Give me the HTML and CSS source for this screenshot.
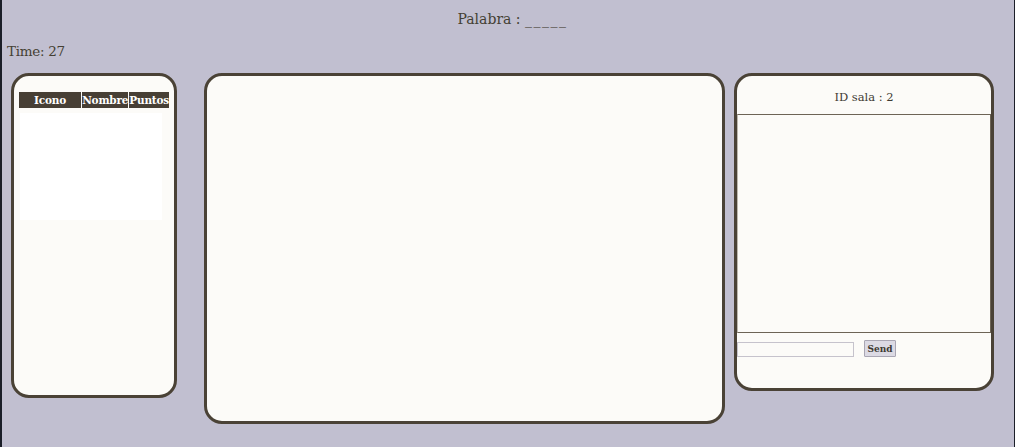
FILE: index.html
```html
<!DOCTYPE html>
<html lang="es">
<head>
<meta charset="utf-8">
<title>Juego</title>
<link rel="stylesheet" href="styles.css">
</head>
<body>
<div class="page">
  <header class="word">Palabra : <span class="blanks">_____</span></header>
  <div class="time">Time: 27</div>
  <main class="panels">
    <section class="panel players">
      <table class="score">
        <thead>
          <tr><th class="c-icon">Icono</th><th class="c-name">Nombre</th><th class="c-pts">Puntos</th></tr>
        </thead>
      </table>
      <div class="score-body"></div>
    </section>
    <section class="panel board"></section>
    <section class="panel chat">
      <div class="room">ID sala : 2</div>
      <div class="messages"></div>
      <div class="composer">
        <input class="msg" type="text">
        <button class="send" type="button">Send</button>
      </div>
    </section>
  </main>
</div>
</body>
</html>
```
FILE: styles.css
```css
html {
  background: #1b1e28;
}
body {
  margin: 0;
  font-family: "DejaVu Serif", "Liberation Serif", serif;
  color: #453f34;
}
.page {
  margin: 0 1px 0 2px;
  height: 447px;
  background: #c1bfd0;
  display: flex;
  flex-direction: column;
  overflow: hidden;
}
.word {
  text-align: center;
  font-size: 14px;
  padding-top: 11px;
  height: 20px;
  line-height: 16px;
  padding-left: 9px;
}
.blanks {
  letter-spacing: 1.5px;
}
.time {
  font-size: 13.5px;
  line-height: 16px;
  margin-top: 12px;
  padding-left: 5px;
  letter-spacing: -0.3px;
}
.panels {
  display: flex;
  align-items: flex-start;
  margin-top: 14px;
  padding-left: 9px;
}
.panel {
  box-sizing: border-box;
  background: #fcfbf8;
  border: 3px solid #4a4236;
  border-radius: 18px;
}
.players {
  width: 166px;
  height: 325px;
  padding: 16px 5px 0 5px;
}
.board {
  width: 521px;
  height: 351px;
  margin-left: 27px;
}
.chat {
  width: 260px;
  height: 318px;
  margin-left: 9px;
  display: flex;
  flex-direction: column;
}
.score {
  border-collapse: separate;
  border-spacing: 1px 0;
  margin-left: -1px;
  width: 152px;
}
.score th {
  background: #473f35;
  color: #ffffff;
  font-size: 10.5px;
  font-weight: bold;
  height: 16px;
  padding: 0;
  line-height: 16px;
  letter-spacing: -0.2px;
}
.c-icon { width: 66px; }
.c-name { width: 44px; }
.c-pts { width: 37px; }
.score-body {
  background: #ffffff;
  margin: 5px 7px 0 1px;
  height: 107px;
}
.room {
  text-align: center;
  font-size: 11.5px;
  height: 38px;
  line-height: 16px;
  padding-top: 13px;
  box-sizing: border-box;
  color: #3e3a33;
}
.messages {
  height: 219px;
  box-sizing: border-box;
  border: 1px solid #6d6456;
  border-left-color: #bdb8ae;
  flex: none;
}
.composer {
  display: flex;
  align-items: center;
  padding-top: 7px;
}
.msg {
  box-sizing: border-box;
  width: 117px;
  height: 15px;
  margin: 1px 0 0 0;
  padding: 0;
  border: 1px solid #c6c3cc;
  background: #fcfbf8;
}
.send {
  box-sizing: border-box;
  margin-left: 10px;
  width: 32px;
  height: 17px;
  padding: 0;
  font-family: "DejaVu Serif", serif;
  font-size: 9px;
  font-weight: bold;
  color: #3e3a33;
  background: #dcdae4;
  border: 1px solid #a9a6b3;
  border-radius: 1px;
}
```
